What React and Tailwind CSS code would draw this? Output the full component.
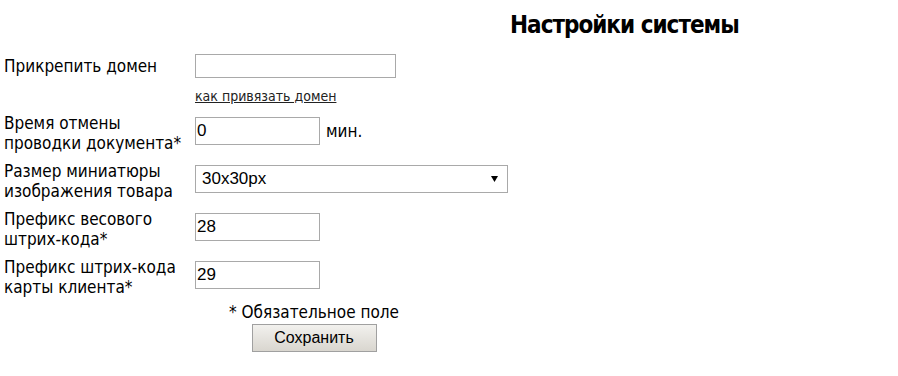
import React from "react";

function Row({ label, children }) {
  return (
    <div className="grid grid-cols-[191px_1fr] py-1">
      <div className="leading-[20px]">{label}</div>
      <div className="flex items-start">{children}</div>
    </div>
  );
}

function TextInput({ value }) {
  return (
    <input
      type="text"
      defaultValue={value}
      className="w-[125px] mt-1 h-[28px] border border-[#a9a9a9] bg-white px-[1px] text-[17px] font-['Liberation_Sans',Arial,sans-serif] [font-stretch:normal] text-black outline-none"
    />
  );
}

export default function App() {
  return (
    <div className="w-[898px] h-[376px] bg-white text-black font-['DejaVu_Sans',Tahoma,sans-serif] [font-stretch:condensed] text-[17px] overflow-hidden">
      <div className="pl-[510px] pt-[11px] text-[24px] leading-[28px] font-bold tracking-[-1px]">
        Настройки системы
      </div>
      <div className="pl-1 mt-[11px]">
        <div className="grid grid-cols-[191px_1fr] h-[32px] items-center">
          <div className="leading-[20px]">Прикрепить домен</div>
          <div>
            <input
              type="text"
              className="block w-[201px] h-[24px] border border-[#a9a9a9] bg-white outline-none"
            />
          </div>
        </div>
        <div className="grid grid-cols-[191px_1fr] pt-[6px] pb-[5px]">
          <div />
          <div className="text-[14px] leading-[16px]">
            <a href="#" className="underline text-[#222]">как привязать домен</a>
          </div>
        </div>
        <Row label={<>Время отмены<br />проводки документа*</>}>
          <TextInput value="0" />
          <span className="ml-[6px] mt-1 leading-[28px]">мин.</span>
        </Row>
        <Row label={<>Размер миниатюры<br />изображения товара</>}>
          <div className="relative mt-1 w-[313px] h-[28px]">
            <select
              defaultValue="30x30px"
              className="appearance-none w-full h-full border border-[#a9a9a9] bg-white pl-[6px] text-[17px] font-['Liberation_Sans',Arial,sans-serif] [font-stretch:normal] text-black outline-none"
            >
              <option>30x30px</option>
              <option>50x50px</option>
              <option>100x100px</option>
            </select>
            <svg className="absolute right-[10px] top-[11px] pointer-events-none" width="7" height="6" viewBox="0 0 7 6">
              <path d="M0 0 H7 L3.5 6 Z" fill="#000" />
            </svg>
          </div>
        </Row>
        <Row label={<>Префикс весового<br />штрих-кода*</>}>
          <TextInput value="28" />
        </Row>
        <Row label={<>Префикс штрих-кода<br />карты клиента*</>}>
          <TextInput value="29" />
        </Row>
      </div>
      <div className="w-[628px] flex flex-col items-center pt-[2px]">
        <div className="text-[17px] leading-[18px]">* Обязательное поле</div>
        <button className="mt-[3px] w-[125px] h-[28px] border border-[#a0a0a0] bg-gradient-to-b from-[#f2f1ee] to-[#d9d6cf] text-[16px] text-black font-['Liberation_Sans',Arial,sans-serif] [font-stretch:normal]">
          Сохранить
        </button>
      </div>
    </div>
  );
}
